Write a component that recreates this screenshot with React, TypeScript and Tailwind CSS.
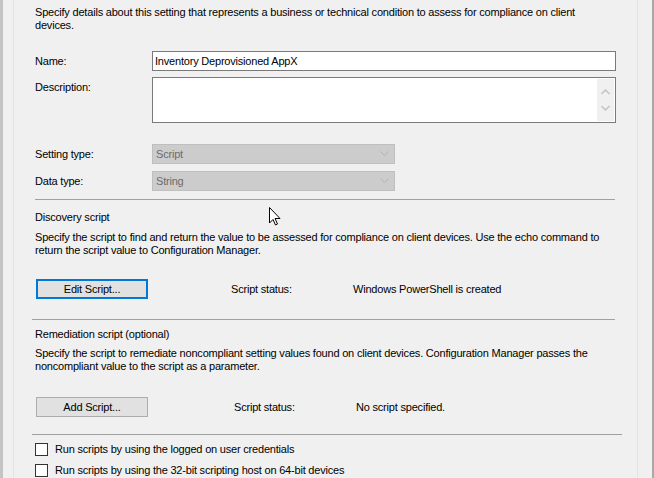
import React from "react";

const font = { fontFamily: '"Liberation Sans", Arial, sans-serif' };

function Separator({ className = "" }: { className?: string }) {
    return <div className={"h-px bg-[#a0a0a0] " + className} />;
}

function Combo({ value }: { value: string }) {
    return (
        <div className="w-[243px] h-[20px] bg-[#cccccc] border border-[#bfbfbf] flex items-center justify-between pl-[3px] pr-[5px] text-[#6d6d6d]">
            <span>{value}</span>
            <svg width="9" height="6" viewBox="0 0 9 6">
                <path d="M0.5 0.5 L4.5 4.5 L8.5 0.5" fill="none" stroke="#b3b3b3" strokeWidth="1" />
            </svg>
        </div>
    );
}

function Checkbox({ label }: { label: string }) {
    return (
        <div className="flex items-center gap-[7px]">
            <div className="w-[13px] h-[13px] bg-white border border-[#333333] shrink-0" />
            <span>{label}</span>
        </div>
    );
}

export default function App() {
    return (
        <div
            className="relative w-[654px] h-[478px] overflow-hidden bg-[#f0f0f0] flex text-[11px] leading-[13px] text-black tracking-[-0.2px]"
            style={font}
        >
            <div className="w-[3px] shrink-0 bg-[#c4c4c4]" />
            <div className="w-[10px] shrink-0" />
            <div className="w-px shrink-0 bg-white border-l border-[#e3e3e3]" />
            <div className="flex-1 min-w-0 pl-[21px] flex flex-col">
                <p className="mt-[6px] w-[560px]">
                    Specify details about this setting that represents a business or technical condition to assess for compliance on client devices.
                </p>

                <div className="mt-[19px] flex items-center">
                    <span className="w-[117px]">Name:</span>
                    <div className="w-[464px] h-[20px] bg-white border border-[#7a7a7a] flex items-center px-[2px]">
                        Inventory Deprovisioned AppX
                    </div>
                </div>

                <div className="mt-[6px] flex items-start">
                    <span className="w-[117px] mt-[4px]">Description:</span>
                    <div className="w-[464px] h-[46px] bg-white border border-[#7a7a7a] flex justify-end">
                        <div className="w-[17px] bg-[#f0f0f0] my-[1px] mr-[1px] flex flex-col items-center justify-between py-[10px]">
                            <svg width="9" height="6" viewBox="0 0 9 6">
                                <path d="M0.5 5 L4.5 1 L8.5 5" fill="none" stroke="#c2c2c2" strokeWidth="1.5" />
                            </svg>
                            <svg width="9" height="6" viewBox="0 0 9 6">
                                <path d="M0.5 1 L4.5 5 L8.5 1" fill="none" stroke="#c2c2c2" strokeWidth="1.5" />
                            </svg>
                        </div>
                    </div>
                </div>

                <div className="mt-[21px] flex items-center">
                    <span className="w-[117px]">Setting type:</span>
                    <Combo value="Script" />
                </div>
                <div className="mt-[7px] flex items-center">
                    <span className="w-[117px]">Data type:</span>
                    <Combo value="String" />
                </div>

                <Separator className="mt-[8px] w-[580px]" />

                <p className="mt-[11px]">Discovery script</p>
                <p className="mt-[7px] w-[590px]">
                    Specify the script to find and return the value to be assessed for compliance on client devices. Use the echo command to return the script value to Configuration Manager.
                </p>

                <div className="mt-[22px] flex items-center">
                    <button className="ml-px w-[112px] h-[20px] bg-[#e1e1e1] border-2 border-[#0078d7] flex items-center justify-center">
                        Edit Script...
                    </button>
                    <span className="ml-[83px] w-[122px]">Script status:</span>
                    <span>Windows PowerShell is created</span>
                </div>

                <Separator className="mt-[20px] w-[583px] -ml-[3px]" />

                <p className="mt-[8px]">Remediation script (optional)</p>
                <p className="mt-[6px] w-[580px]">
                    Specify the script to remediate noncompliant setting values found on client devices. Configuration Manager passes the noncompliant value to the script as a parameter.
                </p>

                <div className="mt-[24px] flex items-center">
                    <button className="ml-px w-[112px] h-[20px] bg-[#e1e1e1] border border-[#adadad] flex items-center justify-center">
                        Add Script...
                    </button>
                    <span className="ml-[86px] w-[122px]">Script status:</span>
                    <span>No script specified.</span>
                </div>

                <Separator className="mt-[17px] w-[590px] -ml-[3px]" />

                <div className="mt-[8px] flex flex-col gap-[8px]">
                    <Checkbox label="Run scripts by using the logged on user credentials" />
                    <Checkbox label="Run scripts by using the 32-bit scripting host on 64-bit devices" />
                </div>
            </div>
            <div className="w-px shrink-0 bg-white border-l border-[#e3e3e3]" />
            <div className="w-[14px] shrink-0" />
            <div className="w-[2px] shrink-0 bg-[#a8a8a8]" />

            <svg className="absolute left-[269px] top-[207px]" width="12" height="19" viewBox="0 0 12 19">
                <path d="M0.5 0.5 L0.5 16 L4 12.5 L6.5 18 L8.5 17 L6 11.5 L11 11.5 Z" fill="white" stroke="black" strokeWidth="1" />
            </svg>
        </div>
    );
}
